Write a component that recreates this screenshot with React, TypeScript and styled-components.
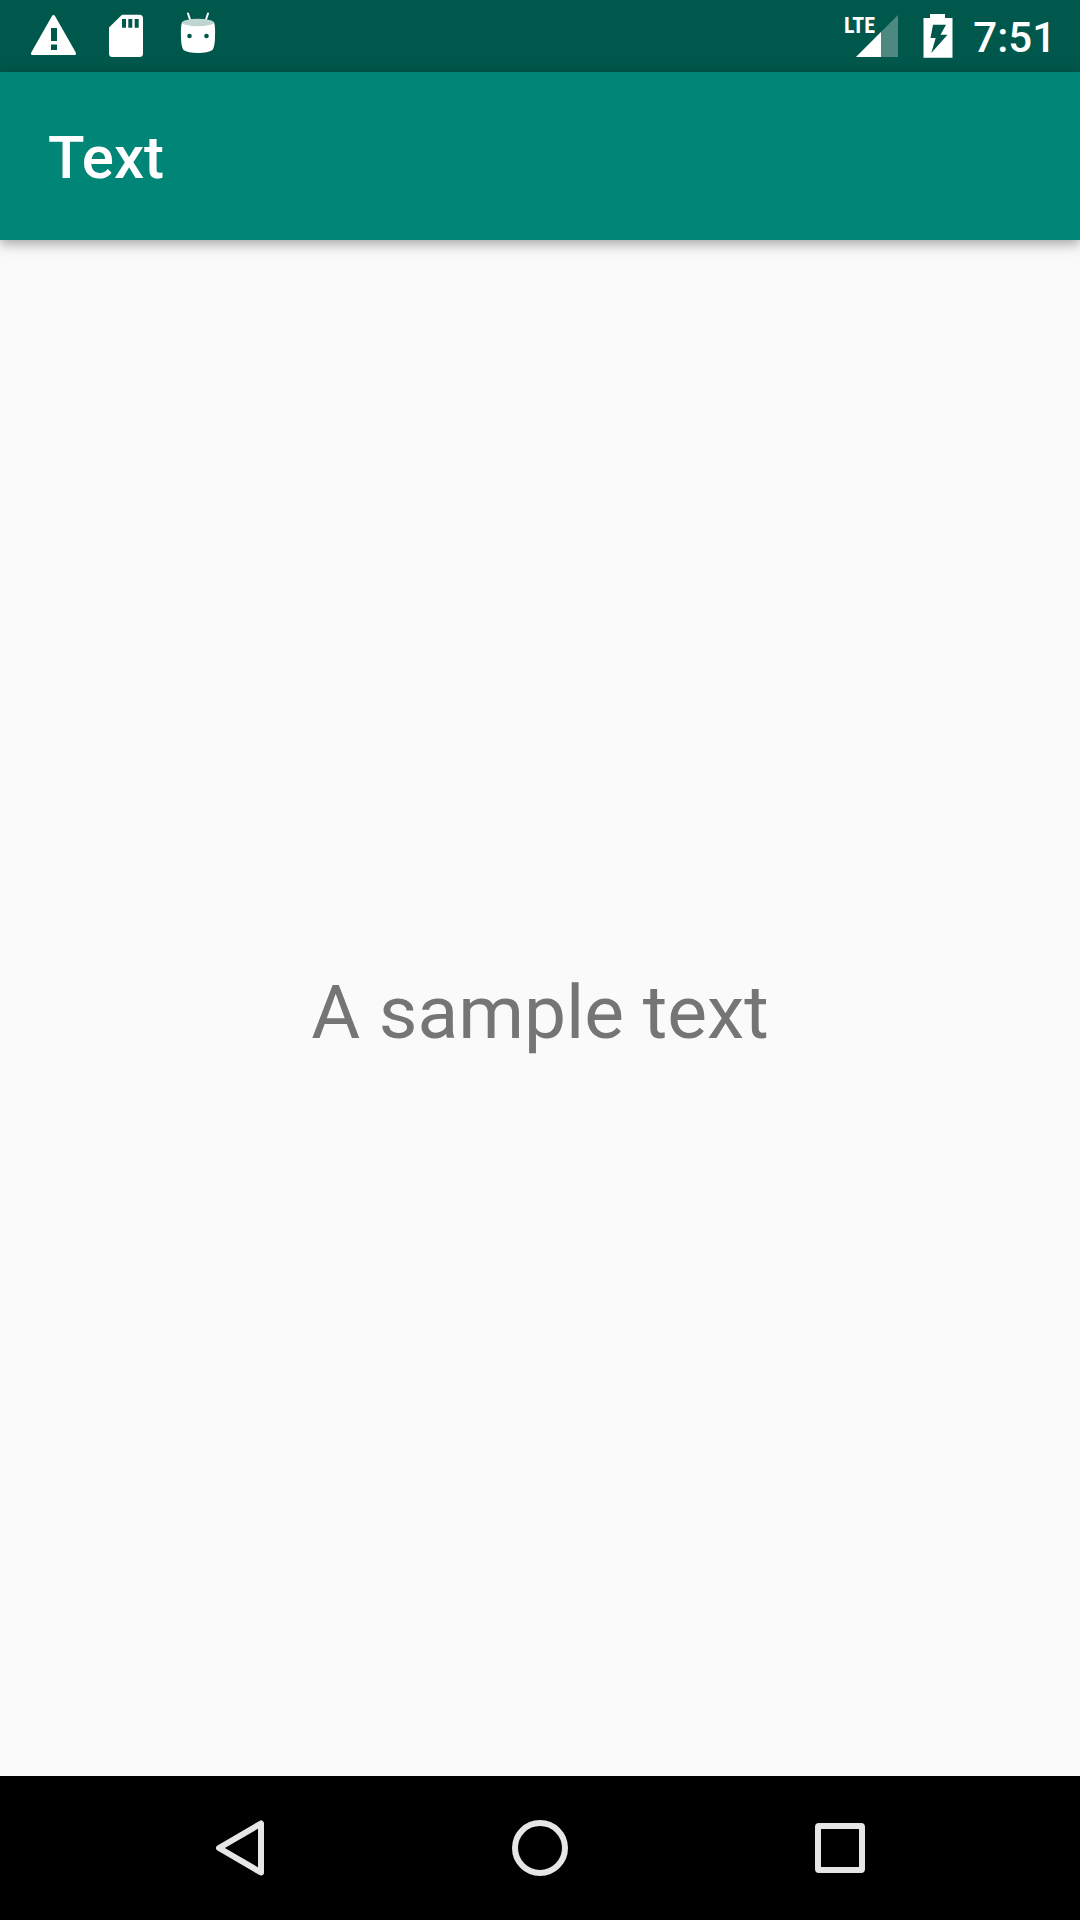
import React from "react";
import styled, { createGlobalStyle } from "styled-components";

const GlobalStyle = createGlobalStyle`
  body {
    margin: 0;
    background: #fafafa;
    font-family: Roboto, "Liberation Sans", sans-serif;
  }
`;

const Screen = styled.div`
  display: flex;
  flex-direction: column;
  min-height: 100vh;
`;

const StatusBar = styled.div`
  display: flex;
  justify-content: space-between;
  align-items: center;
  height: 72px;
  padding: 0 24px 0 18px;
  background: #00574b;
  color: #ffffff;
`;

const IconGroup = styled.div`
  display: flex;
  align-items: center;
`;

const StatusIcon = styled.svg<{ $width?: number }>`
  display: block;
  width: ${({ $width = 72 }) => $width}px;
  height: 72px;
  fill: #ffffff;
`;

const NetworkLabel = styled.text`
  font: bold 22px "Roboto Condensed", "Liberation Sans Narrow", "Liberation Sans", sans-serif;
`;

const Clock = styled.time`
  margin-left: 6px;
  padding-top: 4px;
  font-size: 42px;
  font-weight: 500;
  line-height: 48px;
`;

const AppBar = styled.header`
  position: relative;
  display: flex;
  align-items: center;
  height: 168px;
  padding: 0 48px;
  background: #008577;
  color: #ffffff;
  box-shadow: 0 4px 12px rgba(0, 0, 0, 0.35);
`;

const Title = styled.h1`
  margin: 0;
  padding-top: 4px;
  font-size: 60px;
  font-weight: 500;
  line-height: 72px;
`;

const Content = styled.main`
  display: flex;
  flex: 1;
  align-items: center;
  justify-content: center;
`;

const SampleText = styled.p`
  margin: 0;
  padding-top: 8px;
  color: #757575;
  font-size: 75px;
  line-height: 88px;
`;

const NavigationBar = styled.nav`
  display: flex;
  height: 144px;
  padding: 0 90px;
  background: #000000;
`;

const NavButton = styled.button`
  display: flex;
  flex: 1;
  align-items: center;
  justify-content: center;
  padding: 0;
  border: 0;
  background: none;
  cursor: pointer;
`;

const NavIcon = styled.svg`
  width: 96px;
  height: 96px;
  fill: none;
  stroke: #e6e6e6;
  stroke-width: 6;
  stroke-linejoin: round;
`;

export default function App() {
  return (
    <Screen>
      <GlobalStyle />
      <StatusBar>
        <IconGroup>
          <StatusIcon viewBox="0 0 72 72" aria-label="Warning">
            <path
              fillRule="evenodd"
              d="M34 16Q35.500 14 37 16L57.500 52Q59 55 56.500 55H14.500Q12 55 13.500 52ZM33 28V41H39V28ZM33 44.500V50H39V44.500Z"
            />
          </StatusIcon>
          <StatusIcon viewBox="0 0 72 72" aria-label="Storage">
            <path
              fillRule="evenodd"
              d="M32 14.700H49.500Q53 14.700 53 18.200V53.500Q53 57 49.500 57H22.500Q19 57 19 53.500V27.500ZM32 19V27.700H36V19ZM38.300 19V27.700H42.300V19ZM44.700 19V27.700H48.700V19Z"
            />
          </StatusIcon>
          <StatusIcon viewBox="0 0 72 72" aria-label="Android">
            <path
              d="M26 13.500L28.500 21M46 13.500L43.500 21"
              stroke="#ffffff"
              strokeWidth="2"
              strokeLinecap="round"
            />
            <path d="M20 22Q18.500 27 19 37Q19 46 21.500 50Q26 53 36 53Q46 53 50.500 50Q53 46 53 37Q53.500 27 52 22Q36 30 20 22Z" />
            <ellipse cx="36" cy="22.500" rx="16" ry="3.700" fill="#bfd5d2" />
            <circle cx="27.500" cy="36" r="2.300" fill="#00574b" />
            <circle cx="44.500" cy="36" r="2.300" fill="#00574b" />
          </StatusIcon>
        </IconGroup>
        <IconGroup>
          <StatusIcon viewBox="0 0 72 72" aria-label="LTE signal">
            <path d="M59 15V57H17Z" fillOpacity="0.3" />
            <path d="M42 32V57H17Z" />
            <NetworkLabel x="5" y="33">
              LTE
            </NetworkLabel>
          </StatusIcon>
          <StatusIcon $width={56} viewBox="0 0 56 72" aria-label="Battery charging">
            <path
              fillRule="evenodd"
              d="M19 14H34V18H41.500V57.700H12.500V18H19ZM22 24.700L19.500 38H24.700L20.300 53L36.500 34.700H29.500L35 24.700Z"
            />
          </StatusIcon>
          <Clock>7:51</Clock>
        </IconGroup>
      </StatusBar>
      <AppBar>
        <Title>Text</Title>
      </AppBar>
      <Content>
        <SampleText>A sample text</SampleText>
      </Content>
      <NavigationBar>
        <NavButton aria-label="Back">
          <NavIcon viewBox="0 0 96 96">
            <path d="M69 23.500V72.500L27 48Z" />
          </NavIcon>
        </NavButton>
        <NavButton aria-label="Home">
          <NavIcon viewBox="0 0 96 96">
            <circle cx="48" cy="48" r="25" />
          </NavIcon>
        </NavButton>
        <NavButton aria-label="Recent apps">
          <NavIcon viewBox="0 0 96 96">
            <rect x="26" y="26" width="44" height="44" rx="1" />
          </NavIcon>
        </NavButton>
      </NavigationBar>
    </Screen>
  );
}
